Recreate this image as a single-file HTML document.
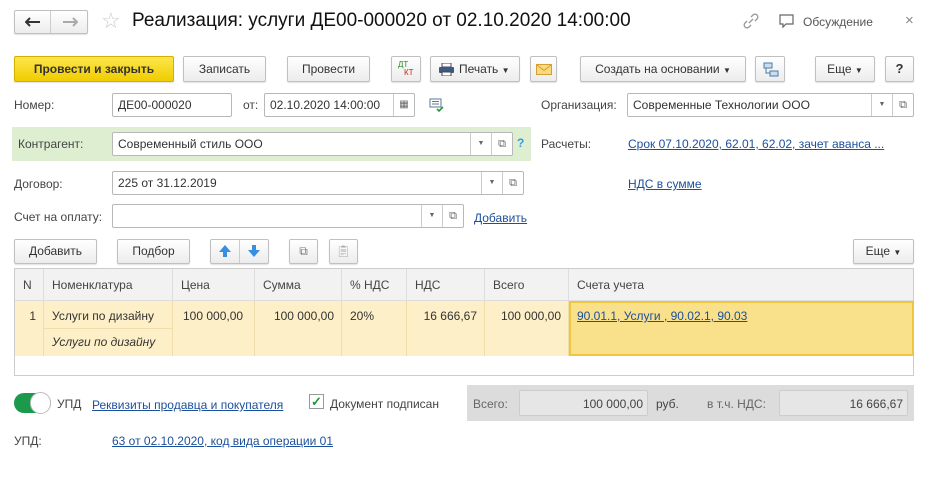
<!DOCTYPE html>
<html><head><meta charset="utf-8"><style>
*{box-sizing:border-box;margin:0;padding:0}
body{width:927px;height:484px;background:#fff;font-family:"Liberation Sans",Arial,sans-serif;font-size:12px;color:#333;position:relative;overflow:hidden}
.a{position:absolute}
.btn{position:absolute;border:1px solid #c0c0c0;border-radius:2px;background:linear-gradient(#fff,#ececec);text-align:center;color:#333;box-shadow:0 1px 1px rgba(0,0,0,.12)}
.inp{position:absolute;border:1px solid #b8b8b8;border-radius:2px;background:#fff;height:24px;padding:4px 5px;white-space:nowrap;overflow:hidden}
.dd{position:absolute;top:0;bottom:0;width:21px;border-left:1px solid #ccc;font-size:7px;color:#666;text-align:center;line-height:22px}
.lbl{position:absolute;color:#444}
a,.lnk{color:#1c4f9c;text-decoration:underline}
.th{position:absolute;top:0;height:32px;line-height:32px;padding-left:8px;border-right:1px solid #ddd;color:#444}
.td{position:absolute;border-right:1px solid #f0deaa}
</style></head><body>
<!-- header -->
<div class="btn" style="left:14px;top:10px;width:74px;height:24px"></div>
<div class="a" style="left:50px;top:11px;width:1px;height:22px;background:#ccc"></div>
<svg class="a" style="left:25px;top:17px" width="16" height="10"><path d="M1 5h14M5 1L1 5l4 4" fill="none" stroke="#333" stroke-width="2"/></svg>
<svg class="a" style="left:62px;top:17px" width="16" height="10"><path d="M1 5h14M11 1l4 4-4 4" fill="none" stroke="#aaa" stroke-width="2"/></svg>
<div class="a" style="left:101px;top:8px;font-size:22px;color:#ccc">☆</div>
<div class="a" style="left:132px;top:10px;font-size:19px;color:#111">Реализация: услуги ДЕ00-000020 от 02.10.2020 14:00:00</div>
<svg class="a" style="left:742px;top:12px" width="18" height="18"><path d="M7 11l4-4M9 5l2-2a2.8 2.8 0 014 4l-2 2M9 13l-2 2a2.8 2.8 0 01-4-4l2-2" fill="none" stroke="#999" stroke-width="1.3"/></svg>
<svg class="a" style="left:778px;top:13px" width="18" height="16"><path d="M2 2h13v9H8l-3 3v-3H2z" fill="none" stroke="#666" stroke-width="1.2"/></svg>
<div class="a" style="left:803px;top:15px;color:#555">Обсуждение</div>
<div class="a" style="left:905px;top:12px;font-size:15px;color:#888">×</div>
<!-- toolbar -->
<div class="btn" style="left:14px;top:56px;width:160px;height:26px;line-height:24px;background:linear-gradient(#fde64b,#f0cc00);border-color:#d4b000;font-weight:bold;color:#333">Провести и закрыть</div>
<div class="btn" style="left:183px;top:56px;width:83px;height:26px;line-height:24px">Записать</div>
<div class="btn" style="left:287px;top:56px;width:83px;height:26px;line-height:24px">Провести</div>
<div class="btn" style="left:391px;top:56px;width:30px;height:26px"><span class="a" style="left:6px;top:3px;font-size:8px;color:#2a8a2a">ДТ</span><span class="a" style="left:12px;top:11px;font-size:8px;color:#c22">КТ</span></div>
<div class="btn" style="left:430px;top:56px;width:90px;height:26px;line-height:24px;text-align:left;padding-left:28px">Печать <span style="font-size:8px">▼</span>
<svg class="a" style="left:8px;top:6px" width="15" height="13"><rect x="3" y="0" width="9" height="4" fill="#fff" stroke="#446"/><rect x="0" y="4" width="15" height="6" rx="1" fill="#3d5a7a"/><rect x="3" y="9" width="9" height="4" fill="#fff" stroke="#446"/></svg></div>
<div class="btn" style="left:530px;top:56px;width:27px;height:26px"><svg class="a" style="left:5px;top:7px" width="16" height="11"><rect x=".5" y=".5" width="15" height="10" fill="#f8d880" stroke="#d6a030"/><path d="M.5 .5l7.5 6 7.5-6" fill="none" stroke="#d6a030"/></svg></div>
<div class="btn" style="left:580px;top:56px;width:166px;height:26px;line-height:24px">Создать на основании <span style="font-size:8px">▼</span></div>
<div class="btn" style="left:755px;top:56px;width:30px;height:26px"><svg class="a" style="left:7px;top:5px" width="16" height="15"><rect x="1" y="1" width="8" height="5" fill="#cde" stroke="#4a7aa8"/><rect x="7" y="9" width="8" height="5" fill="#cde" stroke="#4a7aa8"/><path d="M3 6v5h4" fill="none" stroke="#4a7aa8"/></svg></div>
<div class="btn" style="left:815px;top:56px;width:60px;height:26px;line-height:24px">Еще <span style="font-size:8px">▼</span></div>
<div class="btn" style="left:885px;top:56px;width:29px;height:26px;line-height:24px;font-weight:bold;font-size:13px">?</div>
<!-- row 1 -->
<div class="lbl" style="left:14px;top:98px">Номер:</div>
<div class="inp" style="left:112px;top:93px;width:120px">ДЕ00-000020</div>
<div class="lbl" style="left:243px;top:98px">от:</div>
<div class="inp" style="left:264px;top:93px;width:151px">02.10.2020 14:00:00<div class="dd" style="right:0;font-size:10px;line-height:22px">▦</div></div>
<svg class="a" style="left:429px;top:98px" width="16" height="14"><path d="M1 1h11v8H1z M3 3.5h7M3 6h7" fill="none" stroke="#5a7a9a"/><path d="M8 11l2 2 4-4" fill="none" stroke="#2a9a3a" stroke-width="1.6"/></svg>
<div class="lbl" style="left:541px;top:98px">Организация:</div>
<div class="inp" style="left:627px;top:93px;width:287px">Современные Технологии ООО<div class="dd" style="right:21px">▼</div><div class="dd" style="right:0;font-size:11px">⧉</div></div>
<!-- green -->
<div class="a" style="left:12px;top:127px;width:519px;height:34px;background:#ddefd0"></div>
<div class="lbl" style="left:18px;top:137px">Контрагент:</div>
<div class="inp" style="left:112px;top:132px;width:401px">Современный стиль ООО<div class="dd" style="right:21px">▼</div><div class="dd" style="right:0;font-size:11px">⧉</div></div>
<div class="a" style="left:517px;top:136px;color:#3a9ad9;font-weight:bold">?</div>
<div class="lbl" style="left:541px;top:137px">Расчеты:</div>
<div class="a lnk" style="left:628px;top:137px">Срок 07.10.2020, 62.01, 62.02, зачет аванса ...</div>
<div class="lbl" style="left:14px;top:177px">Договор:</div>
<div class="inp" style="left:112px;top:171px;width:412px">225 от 31.12.2019<div class="dd" style="right:21px">▼</div><div class="dd" style="right:0;font-size:11px">⧉</div></div>
<div class="a lnk" style="left:628px;top:177px">НДС в сумме</div>
<div class="lbl" style="left:14px;top:210px">Счет на оплату:</div>
<div class="inp" style="left:112px;top:204px;width:352px"><div class="dd" style="right:21px">▼</div><div class="dd" style="right:0;font-size:11px">⧉</div></div>
<div class="a lnk" style="left:474px;top:211px">Добавить</div>
<!-- table buttons -->
<div class="btn" style="left:14px;top:239px;width:83px;height:25px;line-height:23px">Добавить</div>
<div class="btn" style="left:117px;top:239px;width:73px;height:25px;line-height:23px">Подбор</div>
<div class="btn" style="left:210px;top:239px;width:59px;height:25px"></div>
<div class="a" style="left:239px;top:240px;width:1px;height:23px;background:#ccc"></div>
<svg class="a" style="left:218px;top:244px" width="14" height="14"><path d="M7 1L1 8h4v5h4V8h4z" fill="#3a8ee0"/></svg>
<svg class="a" style="left:247px;top:244px" width="14" height="14"><path d="M7 13L1 6h4V1h4v5h4z" fill="#3a8ee0"/></svg>
<div class="btn" style="left:289px;top:239px;width:29px;height:25px;color:#777;line-height:23px">⧉</div>
<div class="btn" style="left:329px;top:239px;width:29px;height:25px;color:#aaa;line-height:23px">📋︎</div>
<div class="btn" style="left:853px;top:239px;width:61px;height:25px;line-height:23px">Еще <span style="font-size:8px">▼</span></div>
<!-- table -->
<div class="a" style="left:14px;top:268px;width:900px;height:108px;border:1px solid #ccc;background:#fff">
 <div class="a" style="left:0;top:0;width:898px;height:32px;background:#f2f2f2;border-bottom:1px solid #ddd"></div>
 <div class="th" style="left:0;width:29px">N</div>
 <div class="th" style="left:29px;width:129px">Номенклатура</div>
 <div class="th" style="left:158px;width:82px">Цена</div>
 <div class="th" style="left:240px;width:87px">Сумма</div>
 <div class="th" style="left:327px;width:65px">% НДС</div>
 <div class="th" style="left:392px;width:78px">НДС</div>
 <div class="th" style="left:470px;width:84px">Всего</div>
 <div class="th" style="left:554px;width:344px;border:0">Счета учета</div>
 <div class="a" style="left:0;top:32px;width:554px;height:55px;background:#fdf0c8"></div>
 <div class="td" style="left:0;top:32px;width:29px;height:55px;text-align:right;padding:8px 7px 0 0">1</div>
 <div class="td" style="left:29px;top:32px;width:129px;height:28px;padding:8px 8px;border-bottom:1px solid #f0deaa">Услуги по дизайну</div>
 <div class="td" style="left:29px;top:60px;width:129px;height:27px;padding:6px 8px;font-style:italic">Услуги по дизайну</div>
 <div class="td" style="left:158px;top:32px;width:82px;height:55px;padding:8px 0 0 10px">100 000,00</div>
 <div class="td" style="left:240px;top:32px;width:87px;height:55px;padding:8px 7px 0 0;text-align:right">100 000,00</div>
 <div class="td" style="left:327px;top:32px;width:65px;height:55px;padding:8px 0 0 8px">20%</div>
 <div class="td" style="left:392px;top:32px;width:78px;height:55px;padding:8px 7px 0 0;text-align:right">16 666,67</div>
 <div class="td" style="left:470px;top:32px;width:84px;height:55px;padding:8px 7px 0 0;text-align:right">100 000,00</div>
 <div class="a" style="left:554px;top:32px;width:345px;height:55px;background:#f9e08a;border:2px solid #f0c640;padding:6px 6px"><span class="lnk">90.01.1, Услуги , 90.02.1, 90.03</span></div>
</div>
<!-- bottom -->
<div class="a" style="left:14px;top:393px;width:37px;height:20px;border-radius:10px;background:#1a9a4a"></div>
<div class="a" style="left:30px;top:392px;width:21px;height:22px;border-radius:11px;background:#fff;border:1px solid #bbb"></div>
<div class="lbl" style="left:57px;top:397px">УПД</div>
<div class="a lnk" style="left:92px;top:398px">Реквизиты продавца и покупателя</div>
<div class="a" style="left:309px;top:394px;width:15px;height:15px;border:1px solid #999;background:#fff;color:#1a9a3a;font-weight:bold;font-size:13px;line-height:13px;text-align:center">✓</div>
<div class="lbl" style="left:330px;top:397px">Документ подписан</div>
<div class="a" style="left:467px;top:385px;width:447px;height:36px;background:#dcdcdc"></div>
<div class="lbl" style="left:473px;top:397px;color:#666">Всего:</div>
<div class="a" style="left:519px;top:390px;width:129px;height:26px;background:#e6e6e6;border:1px solid #ccc;border-radius:2px;text-align:right;padding:6px 4px;color:#444">100 000,00</div>
<div class="lbl" style="left:656px;top:397px">руб.</div>
<div class="lbl" style="left:707px;top:397px;color:#666">в т.ч. НДС:</div>
<div class="a" style="left:779px;top:390px;width:129px;height:26px;background:#e6e6e6;border:1px solid #ccc;border-radius:2px;text-align:right;padding:6px 4px;color:#444">16 666,67</div>
<div class="lbl" style="left:14px;top:434px">УПД:</div>
<div class="a lnk" style="left:112px;top:434px">63 от 02.10.2020, код вида операции 01</div>
</body></html>
